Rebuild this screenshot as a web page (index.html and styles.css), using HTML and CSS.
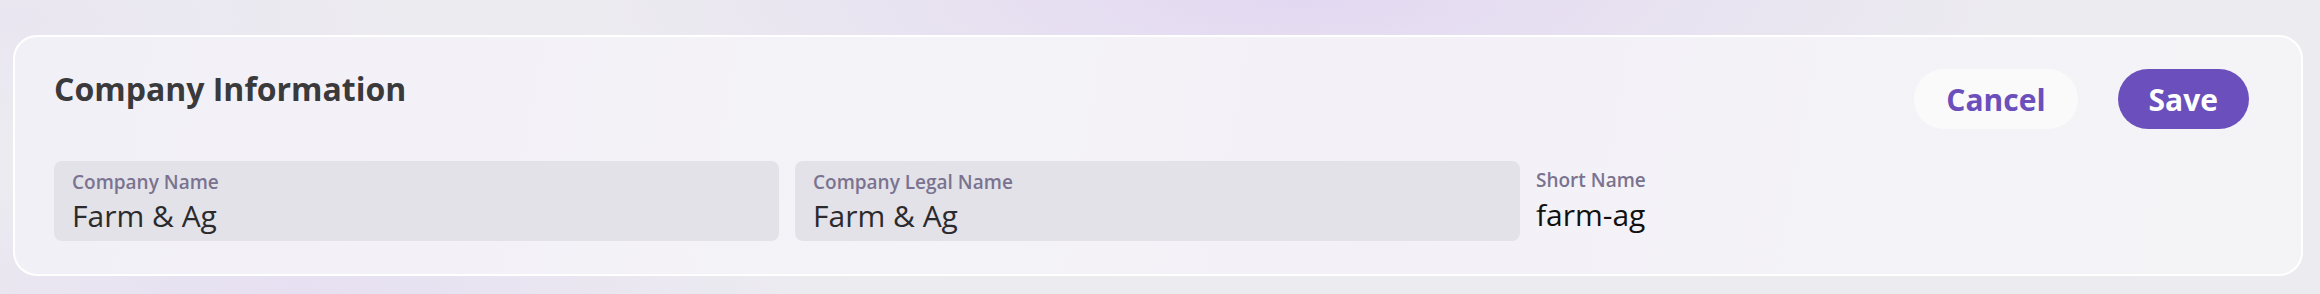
FILE: index.html
```html
<!DOCTYPE html>
<html lang="en">

<head>
    <meta charset="UTF-8">
    <meta name="viewport" content="width=device-width, initial-scale=1.0">
    <title>Company Information</title>
    <link rel="stylesheet" href="styles.css">
</head>

<body>
<div class="card">
    <div class="card_head">
        <h2 class="title">Company Information</h2>
        <div class="actions">
            <button class="btn btn_cancel" type="button">Cancel</button>
            <button class="btn btn_save" type="button">Save</button>
        </div>
    </div>
    <div class="fields">
        <div class="field">
            <label class="field_label" for="companyName">Company Name</label>
            <input class="field_input" type="text" id="companyName" value="Farm &amp; Ag">
        </div>
        <div class="field">
            <label class="field_label" for="legalName">Company Legal Name</label>
            <input class="field_input" type="text" id="legalName" value="Farm &amp; Ag">
        </div>
        <div class="field field_static">
            <span class="field_label">Short Name</span>
            <span class="field_value">farm-ag</span>
        </div>
    </div>
</div>
</body>

</html>
```

FILE: styles.css
```css
* {
    margin: 0;
    padding: 0;
    box-sizing: border-box;
}

html,
body {
    height: 100%;
}

body {
    font-family: "Open Sans", "Liberation Sans", sans-serif;
    background-color: #ecebf0;
    background-image:
        radial-gradient(ellipse 700px 160px at 1300px 0, rgba(226, 214, 242, 0.9), rgba(226, 214, 242, 0) 100%),
        radial-gradient(ellipse 500px 140px at 300px 300px, rgba(228, 220, 242, 0.8), rgba(228, 220, 242, 0) 100%),
        radial-gradient(ellipse 400px 120px at 0 20px, rgba(232, 228, 242, 0.7), rgba(232, 228, 242, 0) 100%);
    overflow: hidden;
}

.card {
    margin: 35px 17px 0 13px;
    padding: 30px 40px 33px 39px;
    border: 2px solid #ffffff;
    border-radius: 24px;
    background: linear-gradient(100deg, #f2f0f7 0%, #f4f3f7 40%, #f3f1f7 60%, #f4f4f7 100%);
}

.card_head {
    display: flex;
    justify-content: space-between;
    align-items: flex-start;
}

.title {
    font-size: 32px;
    font-weight: 700;
    line-height: normal;
    color: #3a3a3c;
}

.actions {
    display: flex;
    gap: 40px;
    margin-top: 2px;
    margin-right: 12px;
}

.btn {
    height: 60px;
    border: none;
    border-radius: 30px;
    font-family: "Open Sans", "Liberation Sans", sans-serif;
    font-size: 30px;
    font-weight: 700;
    cursor: pointer;
}

.btn_cancel {
    padding: 0 32px;
    background: #fafafb;
    color: #6b4fbb;
}

.btn_save {
    padding: 0 31px;
    background: #6b4fbd;
    color: #ffffff;
}

.fields {
    display: grid;
    grid-template-columns: repeat(3, 1fr);
    gap: 16px;
    margin-top: 32px;
}

.field {
    display: flex;
    flex-direction: column;
    height: 80px;
    padding: 8px 18px 5px;
    border-radius: 8px;
    background: #e4e2e9;
}

.field_label {
    font-size: 19px;
    font-weight: 600;
    line-height: normal;
    color: #7a7390;
}

.field_input {
    width: 100%;
    border: none;
    outline: none;
    background: transparent;
    font-family: "Open Sans", "Liberation Sans", sans-serif;
    font-size: 30px;
    line-height: normal;
    color: #2b2b2d;
}

.field_static {
    padding: 6px 0 5px;
    background: none;
}

.field_static .field_label {
    margin-bottom: 1px;
}

.field_value {
    font-size: 30px;
    line-height: normal;
    color: #111111;
}
```
